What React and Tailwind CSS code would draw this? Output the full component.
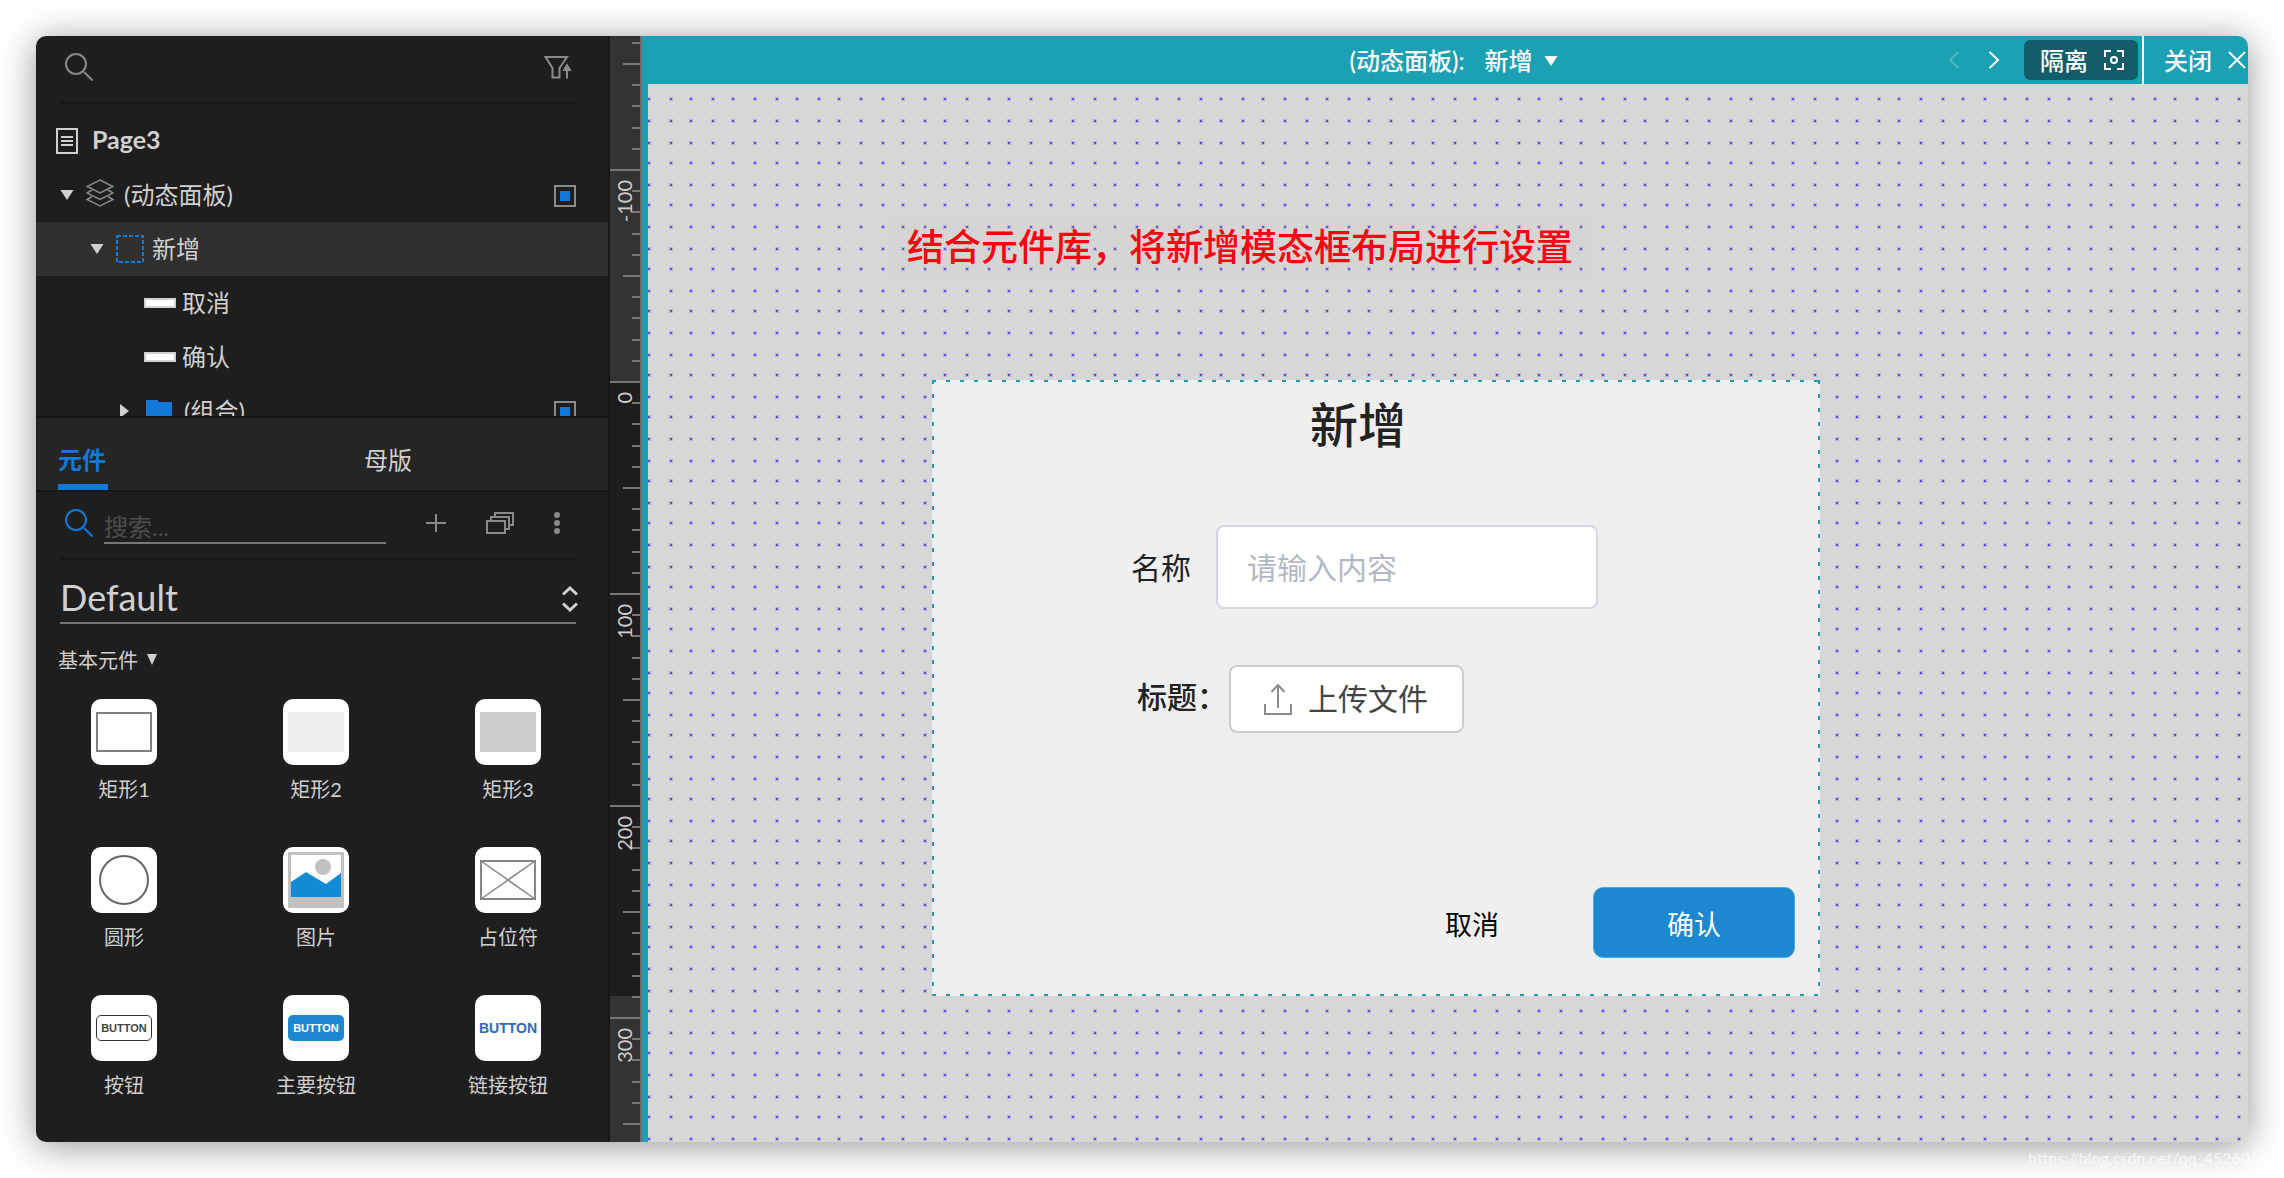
import { useState } from "react";

const RULER_ORIGIN = 346;
const RULER_STEP = 21.2;

const ticks = Array.from({ length: 53 }, (_, i) => i - 16);

const widgets = [
  { name: "矩形1", kind: "box" },
  { name: "矩形2", kind: "lightBox" },
  { name: "矩形3", kind: "greyBox" },
  { name: "圆形", kind: "circle" },
  { name: "图片", kind: "image" },
  { name: "占位符", kind: "placeholder" },
  { name: "按钮", kind: "button" },
  { name: "主要按钮", kind: "primaryButton" },
  { name: "链接按钮", kind: "linkButton" },
];

// the dots repeat every five cells
const dotOffsets = [0, 22, 42, 64, 84];

const SearchIcon = ({ className }) => (
  <svg className={className} width="28" height="28" viewBox="0 0 28 28" fill="none" stroke="currentColor" strokeWidth="2">
    <circle cx="11" cy="11" r="10" />
    <path d="M19 19l8.500 8.500" />
  </svg>
);

const FilterIcon = () => (
  <svg width="28" height="24" viewBox="0 0 28 24" fill="none" stroke="#8a8a8a" strokeWidth="2">
    <path d="M1.500 2h21.500l-7.500 11v9.500h-7V13z" />
    <path d="M23 23.500V11" />
    <path d="M23 8l4.500 8h-9z" fill="#8a8a8a" stroke="none" />
  </svg>
);

const PageIcon = () => (
  <svg width="22" height="26" viewBox="0 0 22 26" fill="none" stroke="#d0d0d0" strokeWidth="2">
    <rect x="1" y="1" width="20" height="24" />
    <path d="M5 9h12M5 13h12M5 17h12" />
  </svg>
);

const LayersIcon = () => (
  <svg width="28" height="28" viewBox="0 0 28 28" fill="none" stroke="#8a8a8a" strokeWidth="1.500">
    <path d="M14 1l13 6.500-13 6.500L1 7.500z" />
    <path d="M6 11l-5 3 13 6.500L27 14l-5-3" />
    <path d="M6 17.500l-5 3L14 27l13-6.500-5-3" />
  </svg>
);

const Caret = ({ open = true, className }) => (
  <svg className={className} width="14" height="14" viewBox="0 0 14 14" fill="currentColor">
    {open ? <path d="M0.500 2h13L7 12z" /> : <path d="M2 0l9 7-9 7z" />}
  </svg>
);

const FolderIcon = () => (
  <svg width="26" height="24" viewBox="0 0 26 24" fill="#1279d8">
    <path d="M0 1h12v2h14v20H0z" />
  </svg>
);

const FrameIcon = () => (
  <svg width="28" height="28" viewBox="0 0 28 28" fill="none">
    <rect x="1" y="1" width="26" height="26" stroke="#1279d8" strokeWidth="2" strokeDasharray="4 2" />
  </svg>
);

const VisibleMark = () => (
  <span className="mt-[2px] ml-auto flex h-[22px] w-[22px] items-center justify-center border-2 border-[#8a8a8a]">
    <span className="h-[10px] w-[10px] bg-[#1279d8]" />
  </span>
);

const BarIcon = () => <span className="h-[10px] w-8 border-2 border-[#d0d0d0] bg-white" />;

const TreeRow = ({ indent, selected, children }) => (
  <li className={`flex h-[54px] items-center pr-8 ${indent} ${selected ? "bg-[#303030]" : ""}`}>{children}</li>
);

const Outline = () => (
  <section className="h-[380px] overflow-hidden">
    <div className="mr-[30px] ml-6 flex h-[68px] items-center justify-between border-b-2 border-[#171717] pr-[6px] pb-1 pl-[5px]">
      <button aria-label="搜索页面元件">
        <SearchIcon className="text-[#8a8a8a]" />
      </button>
      <button aria-label="筛选">
        <FilterIcon />
      </button>
    </div>
    <ul className="mt-[10px]">
      <TreeRow indent="pl-5">
        <PageIcon />
        <span className="ml-[14px] pb-[2px] text-[25px] font-bold">Page3</span>
      </TreeRow>
      <TreeRow indent="pl-6">
        <Caret />
        <span className="mr-[10px] ml-3 pb-[4px]">
          <LayersIcon />
        </span>
        (动态面板)
        <VisibleMark />
      </TreeRow>
      <TreeRow indent="pl-[54px]" selected>
        <Caret />
        <span className="mr-2 ml-3">
          <FrameIcon />
        </span>
        新增
      </TreeRow>
      <TreeRow indent="pl-[108px]">
        <BarIcon />
        <span className="ml-[6px]">取消</span>
      </TreeRow>
      <TreeRow indent="pl-[108px]">
        <BarIcon />
        <span className="ml-[6px]">确认</span>
      </TreeRow>
      <TreeRow indent="pl-[82px]">
        <Caret open={false} />
        <span className="mr-3 ml-[14px]">
          <FolderIcon />
        </span>
        (组合)
        <VisibleMark />
      </TreeRow>
    </ul>
  </section>
);

const WidgetPreview = ({ kind }) => {
  switch (kind) {
    case "box":
      return <span className="h-10 w-14 border-2 border-[#808080] bg-white" />;
    case "lightBox":
      return <span className="h-10 w-14 bg-[#eeeeee]" />;
    case "greyBox":
      return <span className="h-10 w-14 bg-[#cdcdcd]" />;
    case "circle":
      return <span className="h-[50px] w-[50px] rounded-full border-2 border-[#666666]" />;
    case "image":
      return (
        <svg width="56" height="56" viewBox="0 0 56 56">
          <rect width="56" height="56" fill="#c1c1c0" />
          <rect x="3" y="3" width="50" height="42" fill="#fff" />
          <circle cx="35" cy="15" r="8" fill="#c1c1c0" />
          <path d="M3 30l15-10 20 12 15-11v24H3z" fill="#128bd4" />
        </svg>
      );
    case "placeholder":
      return (
        <svg width="56" height="40" viewBox="0 0 56 40" fill="none" stroke="#858585">
          <rect x="1" y="1" width="54" height="38" strokeWidth="2" />
          <path d="M1 1l54 38M55 1L1 39" strokeWidth="1.500" />
        </svg>
      );
    case "button":
      return (
        <span className="flex h-[26px] w-14 items-center justify-center rounded-[5px] border border-[#333333] font-['Liberation_Sans',sans-serif] text-[11px] font-bold text-[#444444]">
          BUTTON
        </span>
      );
    case "primaryButton":
      return (
        <span className="flex h-[26px] w-14 items-center justify-center rounded-[5px] bg-[#1b88cf] font-['Liberation_Sans',sans-serif] text-[11px] font-bold text-white">
          BUTTON
        </span>
      );
    default:
      return (
        <span className="font-['Liberation_Sans',sans-serif] text-[14px] font-bold text-[#3069b8]">
          BUTTON
        </span>
      );
  }
};

const Library = () => {
  const [tab, setTab] = useState("元件");
  const [keyword, setKeyword] = useState("");

  return (
    <section>
      <div className="grid h-[76px] grid-cols-[306px_1fr] border-y-2 border-[#171717] bg-[#252525] pl-[22px]">
        {["元件", "母版"].map((name) => (
          <button
            key={name}
            onClick={() => setTab(name)}
            className={`flex w-[50px] items-center border-b-6 pt-[18px] ${
              tab === name
                ? "border-[#1279d8] font-bold text-[#1279d8]"
                : "border-transparent text-[#d0d0d0]"
            }`}
          >
            {name}
          </button>
        ))}
      </div>

      <div className="mr-[30px] ml-6 flex h-[68px] items-center gap-10 border-b-2 border-[#171717] pr-[18px] pb-1 pl-[5px]">
        <label className="flex flex-1 items-center gap-[11px]">
          <SearchIcon className="shrink-0 text-[#1279d8]" />
          <input
            type="text"
            aria-label="搜索元件"
            placeholder="搜索..."
            value={keyword}
            onChange={(e) => setKeyword(e.target.value)}
            className="mt-2 h-[34px] w-full min-w-0 border-b-2 border-[#777777] pt-[2px] text-[24px] outline-none placeholder:text-[#4c4c4c]"
          />
        </label>
        <button aria-label="添加元件库">
          <svg width="20" height="20" viewBox="0 0 20 20" fill="none" stroke="#8a8a8a" strokeWidth="2">
            <path d="M10 1v18M0 10h20" />
          </svg>
        </button>
        <button aria-label="元件库列表">
          <svg width="28" height="22" viewBox="0 0 28 22" fill="none" stroke="#8a8a8a" strokeWidth="2">
            <rect x="1" y="9" width="18" height="12" />
            <path d="M5 9V5h18v12h-4" />
            <path d="M9 5V1h18v12h-4" />
          </svg>
        </button>
        <button aria-label="更多">
          <svg width="6" height="22" viewBox="0 0 6 22" fill="#8a8a8a">
            <circle cx="3" cy="3" r="3" />
            <circle cx="3" cy="11" r="3" />
            <circle cx="3" cy="19" r="3" />
          </svg>
        </button>
      </div>

      <div className="relative mt-[14px] mr-8 ml-6">
        <select
          aria-label="元件库"
          className="h-[50px] w-full appearance-none border-b-2 border-[#777777] pb-[2px] text-[36px] leading-[46px] outline-none"
        >
          <option>Default</option>
        </select>
        <svg
          className="pointer-events-none absolute top-3 -right-[2px]"
          width="16"
          height="26"
          viewBox="0 0 16 26"
          fill="none"
          stroke="#d0d0d0"
          strokeWidth="3"
        >
          <path d="M1 8.500L8 2l7 6.500M1 17.500L8 24l7-6.500" />
        </svg>
      </div>

      <button className="mt-[22px] ml-[22px] flex h-7 items-center gap-2 text-[20px]">
        基本元件
        <svg width="12" height="12" viewBox="0 0 12 12" fill="#d0d0d0">
          <path d="M1 0h10L6 11z" />
        </svg>
      </button>

      <ul className="mt-[25px] grid grid-cols-3 gap-x-[60px] gap-y-11 pr-[34px] pl-[22px]">
        {widgets.map((w) => (
          <li key={w.name} className="flex flex-col items-center">
            <span className="flex h-[66px] w-[66px] items-center justify-center rounded-[10px] bg-white">
              <WidgetPreview kind={w.kind} />
            </span>
            <span className="mt-[10px] text-[20px] leading-7">{w.name}</span>
          </li>
        ))}
      </ul>
    </section>
  );
};

const Ruler = () => (
  <div className="relative w-8 shrink-0 overflow-hidden border-r-2 border-[#6f6d6f] bg-[#333333]">
    <svg className="absolute inset-0 h-full w-full">
      <rect x="0" y={RULER_ORIGIN} width="30" height="614" fill="#1d1d1d" />
      {ticks.map((n) => {
        const y = Math.round(RULER_ORIGIN + n * RULER_STEP);
        const start = n % 10 === 0 ? 0 : n % 5 === 0 ? 13 : 22;
        return <rect key={n} x={start} y={y - 1} width={30 - start} height="2" fill="#777777" />;
      })}
      {[-100, 0, 100, 200, 300].map((value) => {
        const y = RULER_ORIGIN + (value / 10) * RULER_STEP + 10;
        return (
          <text
            key={value}
            transform={`translate(22 ${y}) rotate(-90)`}
            textAnchor="end"
            fontSize="20"
            fill="#d0d0d0"
          >
            {value}
          </text>
        );
      })}
    </svg>
  </div>
);

const TopBar = () => (
  <header className="grid h-12 shrink-0 grid-cols-[1fr_auto_1fr] items-center bg-[#1ba0b4] pl-[18px] text-[24px] font-medium text-white">
    <span />
    <label className="flex items-center pt-[2px]">
      (动态面板):
      <select className="ml-5 w-12 appearance-none outline-none">
        <option>新增</option>
      </select>
      <Caret className="ml-3" />
    </label>
    <div className="flex h-full items-center justify-end">
      <button aria-label="上一个" className="text-[#46b9c9]">
        <svg width="12" height="18" viewBox="0 0 12 18" fill="none" stroke="currentColor" strokeWidth="2">
          <path d="M10.500 1L2 9l8.500 8" />
        </svg>
      </button>
      <button aria-label="下一个" className="ml-7">
        <svg width="12" height="18" viewBox="0 0 12 18" fill="none" stroke="currentColor" strokeWidth="2">
          <path d="M1.500 1L10 9l-8.500 8" />
        </svg>
      </button>
      <button className="mr-1 ml-6 flex h-10 w-[114px] items-center rounded-md bg-[#125d69] pl-4">
        <span className="pt-[2px]">隔离</span>
        <svg className="ml-4" width="20" height="20" viewBox="0 0 20 20" fill="none" stroke="currentColor" strokeWidth="2">
          <path d="M1 7V1h6M13 1h6v6M19 13v6h-6M7 19H1v-6" />
          <circle cx="10" cy="10" r="3" />
        </svg>
      </button>
      <button className="flex h-full items-center border-l-2 border-white pr-[2px] pl-5">
        <span className="pt-[2px]">关闭</span>
        <svg className="ml-4" width="18" height="18" viewBox="0 0 18 18" fill="none" stroke="currentColor" strokeWidth="2">
          <path d="M1 1l16 16M17 1L1 17" />
        </svg>
      </button>
    </div>
  </header>
);

const DotGrid = () => (
  <svg className="absolute inset-0 h-full w-full">
    <defs>
      <pattern id="dots" x="-1" y="35" width="106" height="106" patternUnits="userSpaceOnUse">
        {dotOffsets.map((y) =>
          dotOffsets.map((x) => (
            <g key={`${x}-${y}`} fill="#5551d8">
              <rect x={x} y={y} width="4" height="4" opacity="0.250" />
              <rect x={x + 1} y={y + 1} width="2" height="2" />
            </g>
          )),
        )}
      </pattern>
    </defs>
    <rect width="100%" height="100%" fill="url(#dots)" />
  </svg>
);

const CreateDialog = () => (
  <div className="absolute top-[296px] left-[284px] h-[616px] w-[888px] bg-[#efefef] text-[#222222]">
    <svg className="pointer-events-none absolute inset-0 h-full w-full" fill="none" stroke="#1b9caf" strokeWidth="2">
      <path d="M0 1H888M0 615H888" strokeDasharray="4 10" />
      <path d="M1 0V616M887 0V616" strokeDasharray="4 10" />
    </svg>
    <form className="flex h-full flex-col" onSubmit={(e) => e.preventDefault()}>
      <h2 className="mt-4 pr-[36px] text-center text-[48px] leading-[58px] font-medium">新增</h2>
      <div className="mt-[71px] flex items-center pl-[199px]">
        <label htmlFor="name" className="text-[30px]">
          名称
        </label>
        <input
          id="name"
          type="text"
          placeholder="请输入内容"
          className="ml-[25px] h-[84px] w-[382px] rounded-lg border-2 border-[#d3d7e2] bg-white px-[29px] text-[30px] outline-none placeholder:text-[#b4b8c5]"
        />
      </div>
      <div className="mt-14 flex items-center pl-[205px]">
        <label htmlFor="upload" className="w-[92px] pb-[6px] text-[30px] font-medium whitespace-nowrap">
          标题：
        </label>
        <button
          id="upload"
          type="button"
          className="flex h-[68px] w-[235px] items-center rounded-lg border-2 border-[#cccccc] bg-white pl-[33px] text-[30px] text-[#444444]"
        >
          <svg className="mr-4" width="28" height="32" viewBox="0 0 28 32" fill="none" stroke="#8c8c8c" strokeWidth="2">
            <path d="M14 25V2M7.500 9L14 2l6.500 7" />
            <path d="M1 21v10h26V21" />
          </svg>
          <span className="pb-[2px]">上传文件</span>
        </button>
      </div>
      <div className="mt-auto mb-[38px] flex items-center justify-end pr-[25px] text-[27px]">
        <button type="button" className="mr-[94px] pt-[6px] text-black">
          取消
        </button>
        <button className="h-[71px] w-[202px] rounded-[10px] border border-[#4fa9e0] bg-[#1b88cf] pt-[6px] text-white">
          确认
        </button>
      </div>
    </form>
  </div>
);

export default function App() {
  return (
    <div className="relative flex min-h-screen bg-white p-9 font-[Lato,'Noto_Sans_CJK_SC',sans-serif]">
      <div className="flex flex-1 overflow-hidden rounded-[10px] shadow-[0_4px_36px_rgba(0,0,0,0.42)]">
        <aside className="w-[574px] shrink-0 border-r-2 border-[#171717] bg-[#1e1e1e] text-[24px] text-[#d0d0d0]">
          <Outline />
          <Library />
        </aside>
        <Ruler />
        <main className="flex min-w-0 flex-1 flex-col">
          <TopBar />
          <div className="relative flex-1 overflow-hidden border-l-6 border-[#1ba0b4] bg-[#d7d7d7]">
            <DotGrid />
            <p className="absolute top-[130px] left-[240px] rounded-lg bg-[#cdc6b0]/10 px-[19px] py-2 text-[37px] leading-[50px] font-medium whitespace-nowrap text-[#ff0010]">
              结合元件库，将新增模态框布局进行设置
            </p>
            <CreateDialog />
          </div>
        </main>
      </div>
      <span className="absolute right-[6px] bottom-2 text-[16px] leading-6 text-white/70">
        https://blog.csdn.net/qq_45260591
      </span>
    </div>
  );
}
